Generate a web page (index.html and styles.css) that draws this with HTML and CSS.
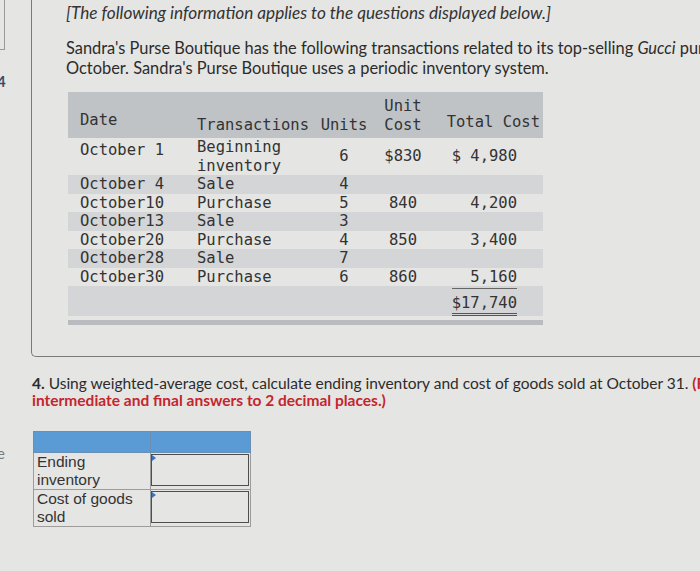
FILE: index.html
```html
<!DOCTYPE html>
<html lang="en">
<head>
<meta charset="utf-8">
<title>Sandra's Purse Boutique</title>
<link rel="stylesheet" href="styles.css">
</head>
<body>
<div class="screen">
  <aside class="rail">
    <div class="rail-tab"></div>
    <div class="rail-num">4</div>
    <div class="rail-e">e</div>
  </aside>
  <main class="main">
    <section class="panel">
      <p class="intro">[The following information applies to the questions displayed below.]</p>
      <p class="lead">Sandra's Purse Boutique has the following transactions related to its top-selling <i>Gucci</i> purse for<br>October. Sandra's Purse Boutique uses a periodic inventory system.</p>
      <table class="tx">
        <thead>
          <tr>
            <th class="c-date">Date</th>
            <th class="c-type">Transactions</th>
            <th class="c-units">Units</th>
            <th class="c-cost">Unit<br>Cost</th>
            <th class="c-total">Total Cost</th>
          </tr>
        </thead>
        <tbody>
          <tr>
            <td class="c-date top">October 1</td>
            <td class="c-type">Beginning<br>inventory</td>
            <td class="c-units">6</td>
            <td class="c-cost">$830</td>
            <td class="c-total">$ 4,980</td>
          </tr>
          <tr class="alt">
            <td class="c-date">October 4</td>
            <td class="c-type">Sale</td>
            <td class="c-units">4</td>
            <td class="c-cost"></td>
            <td class="c-total"></td>
          </tr>
          <tr>
            <td class="c-date">October10</td>
            <td class="c-type">Purchase</td>
            <td class="c-units">5</td>
            <td class="c-cost">840</td>
            <td class="c-total">4,200</td>
          </tr>
          <tr class="alt">
            <td class="c-date">October13</td>
            <td class="c-type">Sale</td>
            <td class="c-units">3</td>
            <td class="c-cost"></td>
            <td class="c-total"></td>
          </tr>
          <tr>
            <td class="c-date">October20</td>
            <td class="c-type">Purchase</td>
            <td class="c-units">4</td>
            <td class="c-cost">850</td>
            <td class="c-total">3,400</td>
          </tr>
          <tr class="alt">
            <td class="c-date">October28</td>
            <td class="c-type">Sale</td>
            <td class="c-units">7</td>
            <td class="c-cost"></td>
            <td class="c-total"></td>
          </tr>
          <tr>
            <td class="c-date">October30</td>
            <td class="c-type">Purchase</td>
            <td class="c-units">6</td>
            <td class="c-cost">860</td>
            <td class="c-total">5,160</td>
          </tr>
          <tr class="alt sum">
            <td class="c-date"></td>
            <td class="c-type"></td>
            <td class="c-units"></td>
            <td class="c-cost"></td>
            <td class="c-total"><span class="grand">$17,740</span></td>
          </tr>
        </tbody>
      </table>
      <div class="tx-foot"></div>
    </section>

    <p class="question"><b>4.</b> Using weighted-average cost, calculate ending inventory and cost of goods sold at October 31. <strong class="note">(Round your</strong><br><strong class="note">intermediate and final answers to 2 decimal places.)</strong></p>

    <table class="answer">
      <thead>
        <tr><th></th><th></th></tr>
      </thead>
      <tbody>
        <tr>
          <td class="label">Ending<br>inventory</td>
          <td class="entry"><span class="box"></span></td>
        </tr>
        <tr>
          <td class="label">Cost of goods<br>sold</td>
          <td class="entry"><span class="box"></span></td>
        </tr>
      </tbody>
    </table>
  </main>
</div>
</body>
</html>
```

FILE: styles.css
```css
html, body {
  margin: 0;
  padding: 0;
}

body {
  width: 700px;
  height: 571px;
  overflow: hidden;
  background: #e5e5e3;
  color: #2e2e2e;
  font-family: Lato, "Open Sans", sans-serif;
}

.screen {
  display: flex;
  height: 571px;
}

/* left rail */
.rail {
  width: 31px;
  flex: none;
  display: flex;
  flex-direction: column;
  overflow: hidden;
}

.rail-tab {
  width: 5px;
  height: 50px;
  border-right: 1px solid #9a9a98;
  border-bottom: 1px solid #9a9a98;
  box-sizing: border-box;
}

.rail-num {
  margin-top: 23px;
  margin-left: -3px;
  font-size: 15px;
  line-height: 16px;
  font-weight: 700;
  color: #3c4a68;
}

.rail-e {
  margin-top: 356px;
  margin-left: -3px;
  font-size: 15px;
  line-height: 16px;
  color: #7c7c7a;
}

/* main */
.main {
  flex: 1;
  min-width: 0;
  overflow: hidden;
}

.panel {
  height: 357px;
  box-sizing: border-box;
  border-left: 1px solid #7a7a7a;
  border-bottom: 1px solid #7a7a7a;
  border-bottom-left-radius: 5px;
  padding: 3px 0 0 34px;
}

.intro {
  margin: 0;
  font-style: italic;
  font-size: 17.2px;
  line-height: 20px;
  white-space: nowrap;
  color: #333;
}

.lead {
  margin: 15px 0 0;
  font-size: 16.4px;
  line-height: 20px;
  white-space: nowrap;
  color: #2c2c2c;
}

/* transactions table */
.tx {
  margin: 14px 0 0 2px;
  border-collapse: collapse;
  font-family: "DejaVu Sans Mono", "Liberation Mono", monospace;
  font-size: 15.5px;
  line-height: 18.5px;
  color: #333;
  table-layout: fixed;
  width: 475px;
}

.tx th,
.tx td {
  padding: 0;
  font-weight: 400;
  box-sizing: border-box;
}

.tx thead tr {
  height: 46px;
  background: #c0c3c6;
}

.tx th {
  vertical-align: bottom;
  padding-bottom: 4px;
}

.tx th.c-date {
  padding-bottom: 9px;
}

.tx td {
  vertical-align: middle;
}

.tx td.top {
  vertical-align: top;
  padding-top: 3px;
}

.tx .alt {
  background: #d4d5d6;
}

.tx .c-date {
  width: 129px;
  padding-left: 12px;
  text-align: left;
}

.tx .c-type {
  width: 123px;
  text-align: left;
}

.tx .c-units {
  width: 48px;
  text-align: center;
}

.tx .c-cost {
  width: 70px;
  text-align: center;
}

.tx .c-total {
  width: 105px;
  text-align: right;
  padding-right: 26px;
}

.tx th.c-total {
  padding-right: 3px;
  padding-bottom: 7px;
}

.tx .sum td {
  height: 30px;
  vertical-align: bottom;
}

.grand {
  display: inline-block;
  border-top: 1px solid #666;
  border-bottom: 3px double #555;
  padding-top: 5px;
  line-height: 19px;
}

.tx-foot {
  margin: 4px 0 0 2px;
  width: 475px;
  height: 5px;
  background: #b9bcbf;
}

/* question */
.question {
  margin: 18px 0 0 1px;
  font-size: 15.5px;
  line-height: 17px;
  white-space: nowrap;
  color: #2c2c2c;
}

.question b {
  font-weight: 700;
}

.note {
  color: #c4262e;
  font-weight: 700;
}

/* answer table */
.answer {
  margin: 22px 0 0 2px;
  border-collapse: collapse;
  table-layout: fixed;
  width: 218px;
  font-family: "Liberation Sans", Arial, sans-serif;
  font-size: 15.5px;
  line-height: 18px;
  color: #333;
}

.answer th,
.answer td {
  border: 1px solid #9c9c9c;
  padding: 0;
}

.answer th {
  height: 20px;
  background: #5b9bd5;
  border-color: #6a8fb5;
}

.answer th:first-child,
.answer td.label {
  width: 116px;
}

.answer td.label {
  padding: 0 3px;
  height: 34px;
}

.answer td.entry {
  padding: 1px 1px 1px 0;
  vertical-align: top;
  position: relative;
}

.box {
  display: block;
  height: 32px;
  border: 1px solid #4e4e4e;
  box-sizing: border-box;
}

.entry::before {
  content: "";
  position: absolute;
  left: 1px;
  top: 2px;
  width: 0;
  height: 0;
  border-top: 3px solid transparent;
  border-bottom: 3px solid transparent;
  border-left: 4px solid #3a74bd;
}
```
